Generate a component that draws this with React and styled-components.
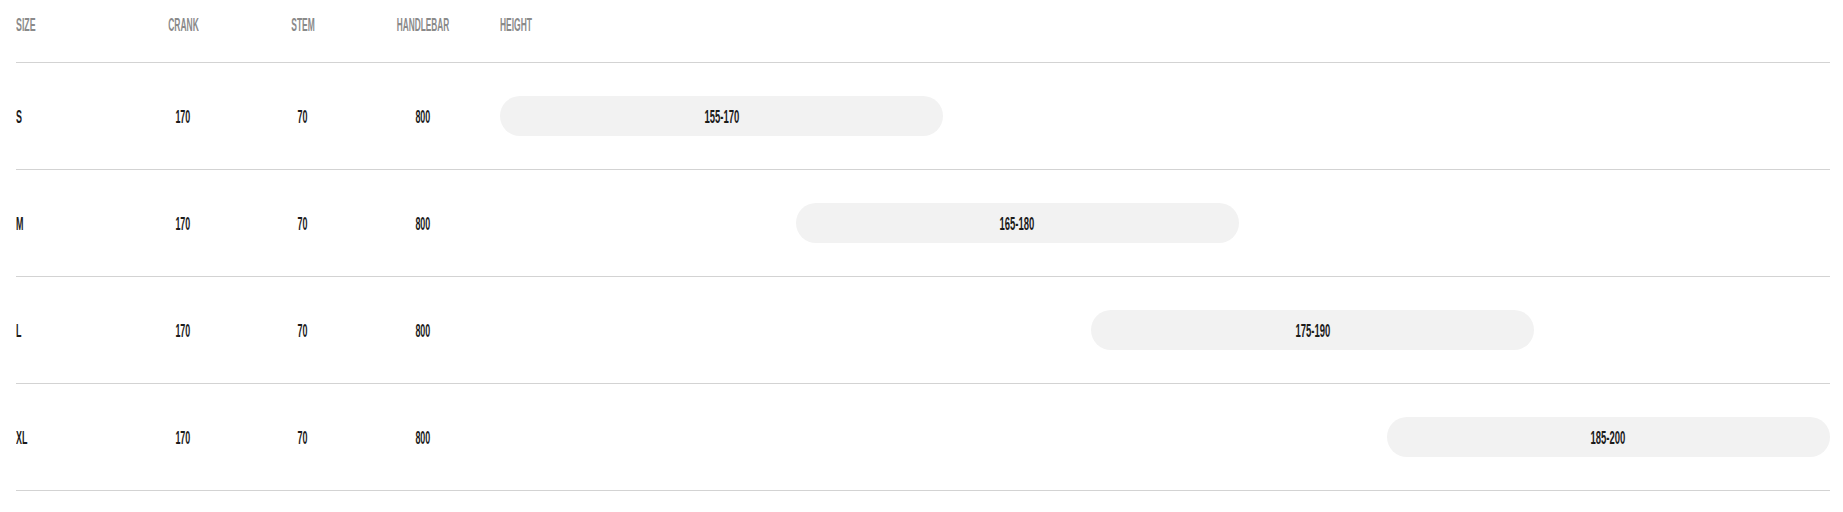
import React from 'react'
import styled, { createGlobalStyle } from 'styled-components'

const GlobalStyle = createGlobalStyle`
  html, body {
    margin: 0;
    padding: 0;
    background: #fff;
  }
  body {
    font-family: 'Liberation Sans', Arial, sans-serif;
  }
`;

const sizes = [
  { size: 'S', crank: 170, stem: 70, handlebar: 800, min: 155, max: 170 },
  { size: 'M', crank: 170, stem: 70, handlebar: 800, min: 165, max: 180 },
  { size: 'L', crank: 170, stem: 70, handlebar: 800, min: 175, max: 190 },
  { size: 'XL', crank: 170, stem: 70, handlebar: 800, min: 185, max: 200 },
];

const RANGE_MIN = 155;
const RANGE_MAX = 200;

const Wrapper = styled.div`
  padding: 0 13px 0 16px;
`;

const Table = styled.div`
  width: 100%;
`;

const Row = styled.div`
  display: grid;
  grid-template-columns: 107px 120px 120px 120px 1fr;
  border-bottom: 1px solid #d3d3d3;
  height: ${p => (p.$head ? '46px' : '106px')};
  padding-top: ${p => (p.$head ? '16px' : '0')};
  align-items: ${p => (p.$head ? 'start' : 'center')};
`;

const Cell = styled.div`
  text-align: ${p => p.$align || 'left'};
  font-size: ${p => (p.$head ? '18px' : '19px')};
  line-height: ${p => (p.$head ? '18px' : '19px')};
  font-weight: 700;
  color: ${p => (p.$head ? '#8a8a8a' : '#1b1b1b')};
  padding-left: ${p => (p.$pad ? '17px' : '0')};
  white-space: nowrap;
`;

const Narrow = styled.span`
  display: inline-block;
  transform: scaleX(${p => p.$sx || 0.47});
  transform-origin: ${p => (p.$left ? 'left center' : 'center center')};
`;

const Track = styled.div`
  display: flex;
  padding-left: 17px;
`;

const Pill = styled.div`
  height: 40px;
  border-radius: 20px;
  background: #f2f2f2;
  display: flex;
  align-items: center;
  justify-content: center;
  font-size: 19px;
  line-height: 19px;
  font-weight: 700;
  color: #1b1b1b;
  white-space: nowrap;
`;

export default function App() {
  const span = RANGE_MAX - RANGE_MIN;
  return (
    <Wrapper>
      <GlobalStyle />
      <Table>
        <Row $head>
          <Cell $head><Narrow $left $sx={0.49}>SIZE</Narrow></Cell>
          <Cell $head $align="center"><Narrow $sx={0.47}>CRANK</Narrow></Cell>
          <Cell $head $align="center"><Narrow $sx={0.47}>STEM</Narrow></Cell>
          <Cell $head $align="center"><Narrow $sx={0.46}>HANDLEBAR</Narrow></Cell>
          <Cell $head $pad><Narrow $left $sx={0.47}>HEIGHT</Narrow></Cell>
        </Row>
        {sizes.map(s => (
          <Row key={s.size}>
            <Cell><Narrow $left>{s.size}</Narrow></Cell>
            <Cell $align="center"><Narrow>{s.crank}</Narrow></Cell>
            <Cell $align="center"><Narrow>{s.stem}</Narrow></Cell>
            <Cell $align="center"><Narrow>{s.handlebar}</Narrow></Cell>
            <Track>
              <Pill
                style={{
                  marginLeft: `${((s.min - RANGE_MIN) / span) * 100}%`,
                  width: `${((s.max - s.min) / span) * 100}%`,
                }}
              >
                <Narrow $sx={0.5}>{s.min}-{s.max}</Narrow>
              </Pill>
            </Track>
          </Row>
        ))}
      </Table>
    </Wrapper>
  );
}
